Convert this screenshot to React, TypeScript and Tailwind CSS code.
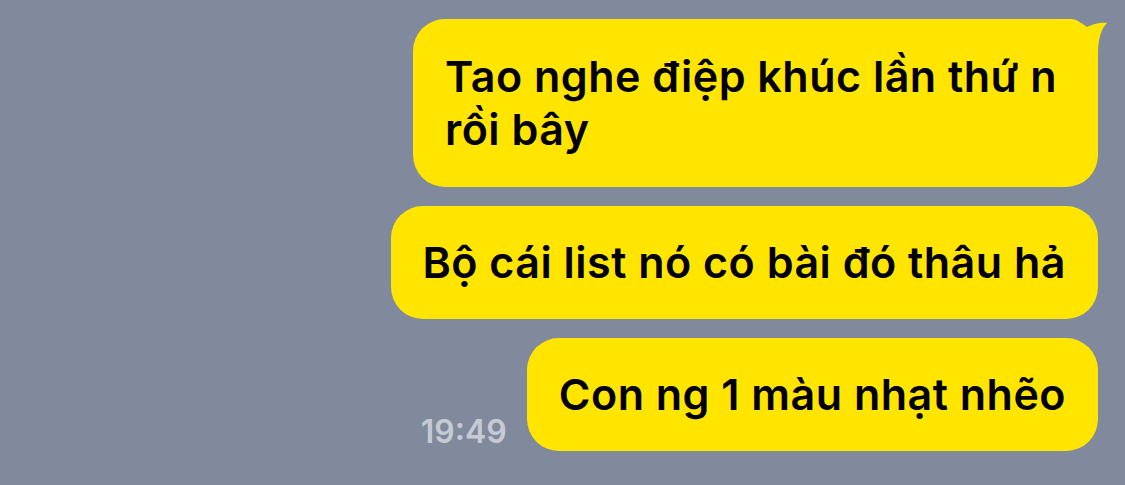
import React from "react";

function Tail() {
  return (
    <svg
      className="absolute right-[-12px] top-0"
      width="52"
      height="52"
      viewBox="0 0 52 52"
    >
      <path
        d="M0 0 L12 0 C20 0 24 5 27 9 C33 6 41 3 49 4 C43 10 40 20 40 35 L40 52 L0 52 Z"
        fill="#ffe500"
      />
    </svg>
  );
}

function Bubble({ children, w, tail }: { children: React.ReactNode; w?: string; tail?: boolean }) {
  return (
    <div className={`relative rounded-[32px] bg-[#ffe500] px-[32px] text-black ${w ?? ""}`}>
      {tail && <Tail />}
      <div className="relative">{children}</div>
    </div>
  );
}

export default function App() {
  return (
    <div
      className="flex h-[485px] w-[1125px] flex-col items-end gap-[19px] bg-[#808a9c] pr-[27px] pt-[19px]"
      style={{ fontFamily: "Inter, 'Noto Sans', sans-serif" }}
    >
      <Bubble w="w-[685px]" tail>
        <div className="pb-[31px] pt-[31px] text-[43px] font-semibold leading-[53px] tracking-[0.5px]">
          Tao nghe điệp khúc lần thứ n rồi bây
        </div>
      </Bubble>
      <Bubble>
        <div className="flex h-[113px] items-center text-[43px] font-semibold tracking-[0.5px]">
          Bộ cái list nó có bài đó thâu hả
        </div>
      </Bubble>
      <div className="flex items-end gap-[20px]">
        <div className="mb-[3px] text-[32px] font-semibold leading-none text-[#c5cad3]">19:49</div>
        <Bubble>
          <div className="flex h-[113px] items-center text-[43px] font-semibold tracking-[0.5px]">
            Con ng 1 màu nhạt nhẽo
          </div>
        </Bubble>
      </div>
    </div>
  );
}
